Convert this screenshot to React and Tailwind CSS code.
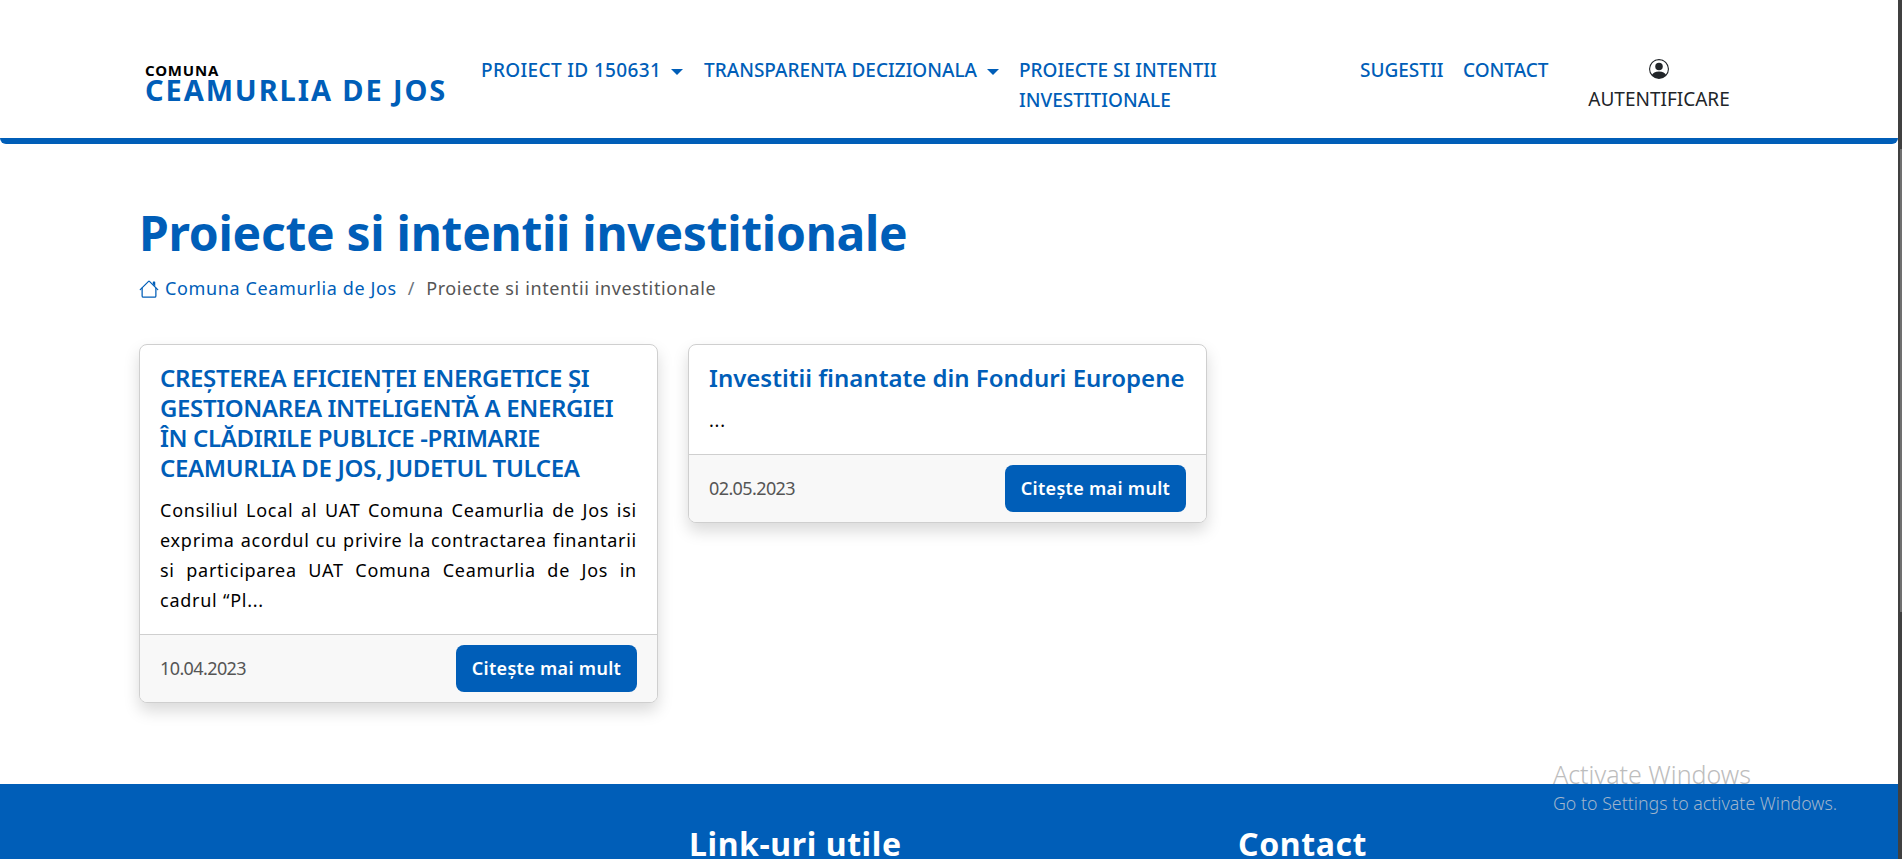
import React from 'react';

const BLUE = 'text-[#005eb8]';

function HomeIcon() {
  return (
    <svg width="20" height="20" viewBox="0 0 16 16" fill="currentColor" className={BLUE}>
      <path fillRule="evenodd" d="M2 13.5V7h1v6.5a.5.5 0 0 0 .5.5h9a.5.5 0 0 0 .5-.5V7h1v6.5a1.5 1.5 0 0 1-1.5 1.5h-9A1.5 1.5 0 0 1 2 13.5zm11-11V6l-2-2V2.5a.5.5 0 0 1 .5-.5h1a.5.5 0 0 1 .5.5z" />
      <path fillRule="evenodd" d="M7.293 1.5a1 1 0 0 1 1.414 0l6.647 6.646a.5.5 0 0 1-.708.708L8 2.207 1.354 8.854a.5.5 0 1 1-.708-.708L7.293 1.5z" />
    </svg>
  );
}

function UserIcon() {
  return (
    <svg width="20" height="20" viewBox="0 0 16 16" fill="currentColor" className="text-[#212529]">
      <path d="M11 6a3 3 0 1 1-6 0 3 3 0 0 1 6 0z" />
      <path fillRule="evenodd" d="M0 8a8 8 0 1 1 16 0A8 8 0 0 1 0 8zm8-7a7 7 0 0 0-5.468 11.37C3.242 11.226 4.805 10 8 10s4.757 1.225 5.468 2.37A7 7 0 0 0 8 1z" />
    </svg>
  );
}

function Caret() {
  return <span className="ml-[10px] inline-block align-middle border-x-[6px] border-t-[6px] border-x-transparent border-t-[#005eb8]" />;
}

function Card({ title, titleCaps, body, date }) {
  return (
    <div className="w-[519px] self-start flex flex-col rounded-lg border border-[#cfcfcf] bg-white shadow-[0_8px_16px_rgba(0,0,0,0.15)] overflow-hidden">
      <div className="px-5 pt-[18px] pb-[19px]">
        <h5 className={`text-[24px] leading-[30px] font-semibold ${BLUE} ${titleCaps || ''}`}>{title}</h5>
        <p className="mt-[12px] text-[18px] leading-[30px] tracking-[0.75px] text-black text-justify">{body}</p>
      </div>
      <div className="flex items-center justify-between border-t border-[#cfcfcf] bg-[#f8f8f8] px-5 py-[10px]">
        <span className="text-[18px] tracking-[-0.6px] text-[#555]">{date}</span>
        <button className="h-[47px] w-[181px] rounded-lg bg-[#005eb8] text-[18px] font-semibold tracking-[0.3px] text-white">Citește mai mult</button>
      </div>
    </div>
  );
}

export default function App() {
  return (
    <div className="relative h-[859px] overflow-hidden bg-white font-['Noto_Sans',sans-serif]">
      <header className="flex h-[144px] w-[1898px] items-start rounded-b-md border-b-[6px] border-[#005eb8] pl-[145px] pt-[55px]">
        <a className="mt-[7px] block w-[336px]">
          <div className="text-[15px] leading-[16px] font-bold tracking-[0.8px] text-black">COMUNA</div>
          <div className="text-[29px] leading-[24px] font-bold tracking-[1.9px] text-[#005eb8]">CEAMURLIA DE JOS</div>
        </a>
        <nav className="flex text-[19px] leading-[30px] font-medium text-[#005eb8]">
          <a className="w-[223px] tracking-[0.35px]">PROIECT ID 150631<Caret /></a>
          <a className="w-[315px]">TRANSPARENTA DECIZIONALA<Caret /></a>
          <a className="w-[341px]">PROIECTE SI INTENTII<br />INVESTITIONALE</a>
          <a className="w-[103px]">SUGESTII</a>
          <a className="w-[126px]">CONTACT</a>
          <a className="-mt-[2px] flex w-[140px] flex-col items-center font-normal text-[#212529]">
            <span className="flex h-[31px] items-center"><UserIcon /></span>
            AUTENTIFICARE
          </a>
        </nav>
      </header>

      <main className="h-[640px] pl-[139px] pt-[58px]">
        <h1 className={`text-[48px] leading-[62px] font-bold tracking-[-0.28px] ${BLUE}`}>Proiecte si intentii investitionale</h1>
        <div className="mt-[11px] flex items-center gap-[6px] text-[18px] leading-[27px] tracking-[0.62px]">
          <HomeIcon />
          <a className={BLUE}>Comuna Ceamurlia de Jos</a>
          <span className="px-[5px] text-[#6c757d]">/</span>
          <span className="text-[#555]">Proiecte si intentii investitionale</span>
        </div>

        <div className="mt-[42px] flex gap-[30px]">
          <Card
            title="CREȘTEREA EFICIENȚEI ENERGETICE ȘI GESTIONAREA INTELIGENTĂ A ENERGIEI ÎN CLĂDIRILE PUBLICE -PRIMARIE CEAMURLIA DE JOS, JUDETUL TULCEA"
            titleCaps="tracking-[-0.35px]"
            body="Consiliul Local al UAT Comuna Ceamurlia de Jos isi exprima acordul cu privire la contractarea finantarii si participarea UAT Comuna Ceamurlia de Jos in cadrul “Pl..."
            date="10.04.2023"
          />
          <Card title="Investitii finantate din Fonduri Europene" body="..." date="02.05.2023" />
        </div>
      </main>

      <footer className="flex h-[200px] bg-[#005eb8] pl-[689px] pt-[39px] text-[32px] leading-[42px] font-bold tracking-[0.6px] text-white">
        <h3 className="w-[549px]">Link-uri utile</h3>
        <h3>Contact</h3>
      </footer>

      {/* windows watermark over the page */}
      <div className="absolute left-[1553px] top-[758px] font-light text-[#bdbdbd]">
        <div className="text-[25px] leading-[32px]">Activate Windows</div>
        <div className="mt-[1px] text-[17.8px] leading-[24px] text-[#9fb4cc]">Go to Settings to activate Windows.</div>
      </div>

      {/* scrollbar strip */}
      <div className="absolute right-0 top-0 h-full w-[4px] bg-[#404040]">
        <div className="absolute right-0 top-[149px] h-[463px] w-[2px] bg-[#707070]" />
      </div>
    </div>
  );
}
